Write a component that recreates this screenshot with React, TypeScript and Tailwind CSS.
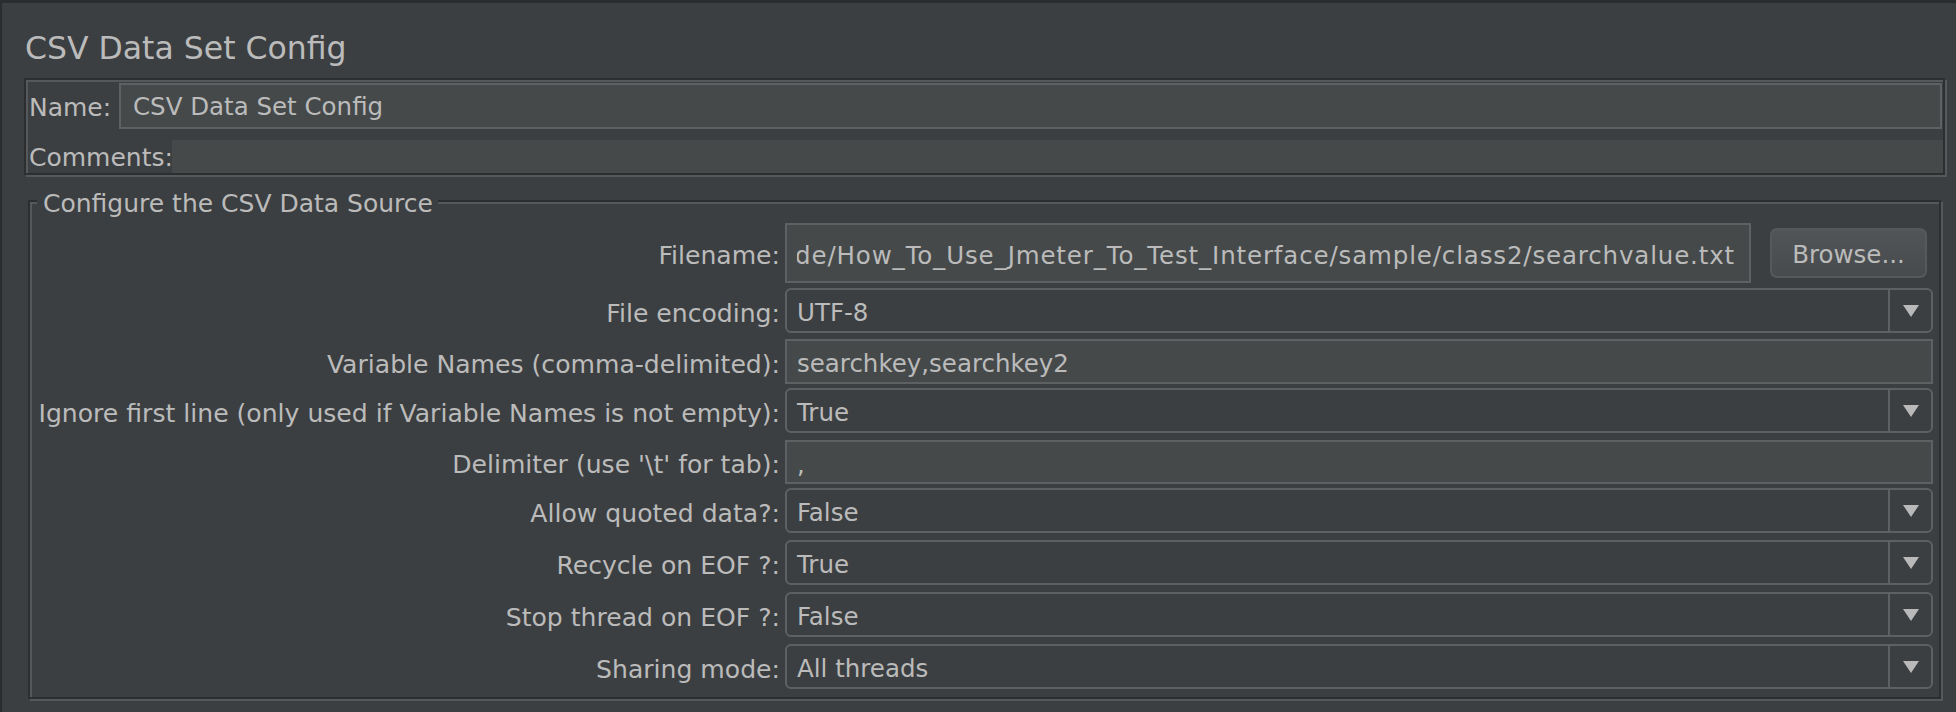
import React from 'react';

const font = { fontFamily: '"DejaVu Sans", "Liberation Sans", sans-serif' };

type RowProps = {
  label: string;
  className: string;
  children: React.ReactNode;
};

const Row: React.FC<RowProps> = ({ label, className, children }) => (
  <div className={`flex items-stretch ${className}`}>
    <div className="flex w-[755px] shrink-0 items-center justify-end pt-[6px] pr-[5px] text-[25.1px] whitespace-nowrap">
      {label}
    </div>
    <div className="flex flex-1 items-center">{children}</div>
  </div>
);

const Combo: React.FC<{ value: string }> = ({ value }) => (
  <div className="flex h-full flex-1 rounded-[6px] border-2 border-[#5e6164] bg-[#3c3f41]">
    <div className="flex flex-1 items-center pt-[6px] pl-[10px] text-[24.5px] whitespace-nowrap">{value}</div>
    <div className="flex w-[43px] shrink-0 items-center justify-center border-l-2 border-[#5e6164]">
      <svg width="16" height="12" viewBox="0 0 16 12">
        <path d="M0 0H16L8 12Z" fill="#b9b9b9" />
      </svg>
    </div>
  </div>
);

const TextField: React.FC<{ value: string }> = ({ value }) => (
  <div className="flex h-full flex-1 items-center border-2 border-[#5e6164] bg-[#45494a] pt-[6px] pl-[10px] text-[24.5px] whitespace-nowrap">
    {value}
  </div>
);

export default function App() {
  return (
    <div
      className="h-[712px] w-[1956px] overflow-hidden border-t-[3px] border-l-2 border-[#2a2c2e] bg-[#3c3f41] text-[#bbbbbb]"
      style={font}
    >
      <div className="pt-[26px] pl-[23px] text-[31.5px] leading-[38px]">CSV Data Set Config</div>

      {/* name / comments block */}
      <div className="mt-[11px] ml-[22px] w-[1921px] border-2 border-[#2c2e30] shadow-[2px_2px_0_#56595b,inset_2px_2px_0_#56595b]">
        <div className="mt-[3px] flex h-[46px] pr-[1px] pl-[3px]">
          <div className="flex w-[90px] shrink-0 items-center pt-[3px] text-[25px]">Name:</div>
          <div className="flex flex-1 items-center border-2 border-[#5e6164] bg-[#45494a] pt-[3px] pl-[12px] text-[24.5px]">
            CSV Data Set Config
          </div>
        </div>
        <div className="mt-[11px] flex h-[33px] pl-[3px]">
          <div className="flex w-[143px] shrink-0 items-center pt-[3px] text-[25px]">Comments:</div>
          <div className="flex-1 bg-[#45494a]" />
        </div>
      </div>

      {/* CSV data source group */}
      <div className="relative mt-[25px] ml-[26px] h-[499px] w-[1913px] border-2 border-[#2c2e30] pt-[21px] pr-[6px] pb-[8px] shadow-[2px_2px_0_#56595b,inset_2px_2px_0_#56595b]">
        <span className="absolute top-[-13px] left-[7px] bg-[#3c3f41] pr-[5px] pl-[6px] text-[25px] leading-[30px] whitespace-nowrap">
          Configure the CSV Data Source
        </span>

        <Row label="Filename:" className="h-[60px]">
          <div className="flex h-full w-[966px] shrink-0 items-center overflow-hidden border-2 border-[#5e6164] bg-[#45494a] pt-[6px]">
            <div className="mr-[14px] ml-[10px] flex flex-1 justify-end overflow-hidden">
              <span className="shrink-0 text-[24.5px] tracking-[0.85px] whitespace-nowrap">
                /Users/tester/Documents/code/How_To_Use_Jmeter_To_Test_Interface/sample/class2/searchvalue.txt
              </span>
            </div>
          </div>
          <div className="mr-[6px] ml-[19px] flex h-[50px] flex-1 items-center justify-center rounded-[7px] border-2 border-[#55595b] bg-gradient-to-b from-[#515557] to-[#474b4d] pt-[4px] text-[24.5px]">
            Browse...
          </div>
        </Row>
        <Row label="File encoding:" className="mt-[5px] h-[45px]">
          <Combo value="UTF-8" />
        </Row>
        <Row label="Variable Names (comma-delimited):" className="mt-[6px] h-[45px]">
          <TextField value="searchkey,searchkey2" />
        </Row>
        <Row label="Ignore first line (only used if Variable Names is not empty):" className="mt-[4px] h-[45px]">
          <Combo value="True" />
        </Row>
        <Row label="Delimiter (use '\t' for tab):" className="mt-[7px] h-[44px]">
          <TextField value="," />
        </Row>
        <Row label="Allow quoted data?:" className="mt-[4px] h-[45px]">
          <Combo value="False" />
        </Row>
        <Row label="Recycle on EOF ?:" className="mt-[7px] h-[45px]">
          <Combo value="True" />
        </Row>
        <Row label="Stop thread on EOF ?:" className="mt-[7px] h-[45px]">
          <Combo value="False" />
        </Row>
        <Row label="Sharing mode:" className="mt-[7px] h-[45px]">
          <Combo value="All threads" />
        </Row>
      </div>
    </div>
  );
}
